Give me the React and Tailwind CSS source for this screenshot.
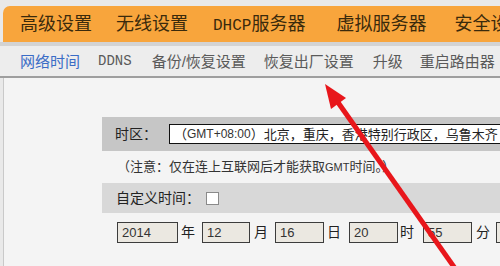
import React from "react";

const CJK = { fontFamily: '"Liberation Sans", "Noto Sans CJK SC", sans-serif' };
const MONO = { fontFamily: '"Liberation Mono", "Noto Sans CJK SC", monospace' };

function TimeInput({ value, w }) {
  return (
    <div className={`shrink-0 h-[21px] ${w} border border-[#3c3c3c] bg-[#ebe8e1] flex items-center pl-[4px] text-[13px] text-[#333] leading-none`}>
      {value}
    </div>
  );
}

export default function App() {
  return (
    <div className="relative w-[500px] h-[266px] overflow-hidden bg-[#e9e9e9]" style={CJK}>
      {/* top orange menu */}
      <div className="pt-[6px] pl-[3px]">
        <div className="h-[36px] bg-[#f8a53c] rounded-tl-[7px] flex items-center pl-[17px] text-[18px] text-[#3a2a0c] whitespace-nowrap leading-none overflow-hidden">
          <span className="shrink-0">高级设置</span>
          <span className="shrink-0 ml-[24px]">无线设置</span>
          <span className="shrink-0 ml-[25px]"><span className="text-[16px]" style={MONO}>DHCP</span>服务器</span>
          <span className="shrink-0 ml-[31px]">虚拟服务器</span>
          <span className="shrink-0 ml-[28px]">安全设置</span>
        </div>
      </div>
      <div className="h-[4px] bg-[#d3d3d3]" />
      {/* sub nav */}
      <div className="h-[30px] bg-[#ededed] flex items-center pl-[20px] text-[15px] text-[#5a5a5a] whitespace-nowrap leading-none overflow-hidden">
        <span className="shrink-0 text-[#3a6cc6]">网络时间</span>
        <span className="shrink-0 ml-[18px] text-[14px]" style={MONO}>DDNS</span>
        <span className="shrink-0 ml-[20px]">备份/恢复设置</span>
        <span className="shrink-0 ml-[18px]">恢复出厂设置</span>
        <span className="shrink-0 ml-[19px]">升级</span>
        <span className="shrink-0 ml-[17px]">重启路由器</span>
      </div>
      <div className="h-[2px] bg-[#9e9e9e]" />
      {/* content */}
      <div className="ml-[3px] border-l border-[#c9c9c9] bg-[#f4f4f4] h-[200px] pt-[39px] pl-[98px] text-[#222]">
        <div className="h-[34px] bg-[#c6c6c6] flex items-center pl-[13px] whitespace-nowrap overflow-hidden">
          <span className="shrink-0 text-[14px]">时区：</span>
          <div className="shrink-0 ml-[12px] h-[20px] w-[360px] border border-[#111] bg-white flex items-center pl-[4px] text-[13px] leading-none">
            （<span className="text-[12px] text-[#333]">GMT+08:00</span>）北京，重庆，香港特别行政区，乌鲁木齐
          </div>
        </div>
        <div className="h-[32px] flex items-center pl-[15px] text-[13px] text-[#333] whitespace-nowrap">
          （注意：仅在连上互联网后才能获取<span className="text-[11px]">GMT</span>时间。）
        </div>
        <div className="h-[30px] bg-[#d8d8d8] flex items-center pl-[14px] whitespace-nowrap">
          <span className="shrink-0 text-[14px]">自定义时间：</span>
          <div className="shrink-0 ml-[6px] w-[13px] h-[13px] bg-white border border-[#8a8a8a]" />
        </div>
        <div className="pt-[9px] pl-[15px] flex items-center text-[14px] text-[#222] whitespace-nowrap overflow-hidden">
          <TimeInput value="2014" w="w-[61px]" />
          <span className="shrink-0 ml-[3px]">年</span>
          <span className="shrink-0 ml-[7px]"><TimeInput value="12" w="w-[48px]" /></span>
          <span className="shrink-0 ml-[4px]">月</span>
          <span className="shrink-0 ml-[7px]"><TimeInput value="16" w="w-[49px]" /></span>
          <span className="shrink-0 ml-[3px]">日</span>
          <span className="shrink-0 ml-[8px]"><TimeInput value="20" w="w-[49px]" /></span>
          <span className="shrink-0 ml-[2px]">时</span>
          <span className="shrink-0 ml-[9px]"><TimeInput value="55" w="w-[49px]" /></span>
          <span className="shrink-0 ml-[4px]">分</span>
          <span className="shrink-0 ml-[6px]"><TimeInput value="3" w="w-[40px]" /></span>
        </div>
      </div>
      {/* red arrow annotation */}
      <svg className="absolute left-0 top-0" width="500" height="266" viewBox="0 0 500 266">
        <line x1="337" y1="101" x2="490" y2="318" stroke="#e8161b" strokeWidth="5" />
        <polygon points="325,84 331,109 346,98" fill="#e8161b" />
      </svg>
    </div>
  );
}
